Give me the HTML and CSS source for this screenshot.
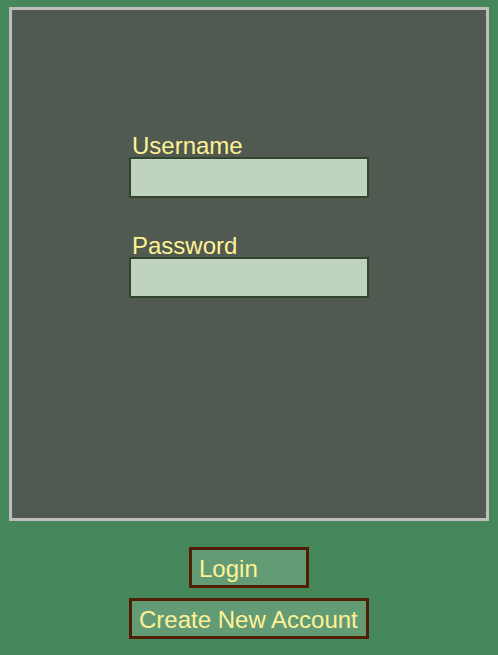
FILE: index.html
```html
<!DOCTYPE html>
<html lang="en">
<head>
<meta charset="utf-8">
<title>Login</title>
<link rel="stylesheet" href="styles.css">
</head>
<body>
<form class="page">
  <div class="panel">
    <div class="field">
      <label for="username">Username</label>
      <input id="username" type="text">
    </div>
    <div class="field">
      <label for="password">Password</label>
      <input id="password" type="password">
    </div>
  </div>
  <div class="actions">
    <button class="btn btn-login" type="submit">Login</button>
    <button class="btn btn-create" type="button">Create New Account</button>
  </div>
</form>
</body>
</html>
```
FILE: styles.css
```css
* {
  box-sizing: border-box;
}

body {
  margin: 0;
  min-height: 100vh;
  background: #45875b;
  color: #fff296;
  font-family: "Liberation Sans", Arial, sans-serif;
  font-size: 24px;
  line-height: 22px;
}

.page {
  display: flex;
  flex-direction: column;
  gap: 26px;
  min-height: 100vh;
  padding: 7px 9px 16px;
}

.panel {
  flex: 1;
  display: flex;
  flex-direction: column;
  align-items: center;
  gap: 37px;
  padding-top: 125px;
  border: 3px solid #bebebe;
  background: #515a50;
}

.field {
  display: flex;
  flex-direction: column;
  width: 240px;
}

.field label {
  padding-left: 3px;
}

.field input {
  height: 41px;
  padding: 0 8px;
  border: 2px solid #32452f;
  border-radius: 0;
  background: #c0d3c0;
  color: #32452f;
  font: inherit;
  outline: none;
}

.actions {
  display: flex;
  flex-direction: column;
  align-items: center;
  gap: 10px;
}

.btn {
  height: 41px;
  padding: 2px 7px 0;
  border: 3px solid #501e05;
  border-radius: 0;
  background: #639b75;
  color: inherit;
  font: inherit;
  text-align: left;
  white-space: nowrap;
}

.btn-login {
  width: 120px;
}

.btn-create {
  width: 240px;
}
```
